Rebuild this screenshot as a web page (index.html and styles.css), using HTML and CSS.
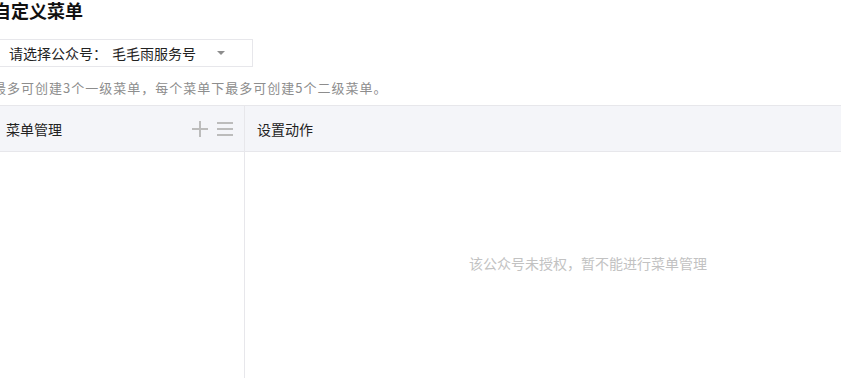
FILE: index.html
```html
<!DOCTYPE html>
<html lang="zh-CN">
<head>
  <meta charset="UTF-8">
  <title>自定义菜单</title>
  <link rel="stylesheet" href="styles.css">
</head>
<body>
  <div class="page">
    <h2 class="title">自定义菜单</h2>

    <div class="account-select">
      <span class="label">请选择公众号：</span>
      <span class="value">毛毛雨服务号</span>
      <span class="arrow"></span>
    </div>

    <p class="tips">最多可创建3个一级菜单，每个菜单下最多可创建5个二级菜单。</p>

    <div class="menu-box">
      <div class="menu-left">
        <div class="menu-hd">
          <span>菜单管理</span>
          <span class="tools">
            <svg width="16" height="16" viewBox="0 0 16 16"><path d="M8 0v16M0 8h16" stroke="#bcbcbc" stroke-width="2"/></svg>
            <svg width="16" height="16" viewBox="0 0 16 16"><path d="M0 2h16M0 8h16M0 14h16" stroke="#bcbcbc" stroke-width="2"/></svg>
          </span>
        </div>
      </div>
      <div class="menu-right">
        <div class="menu-hd">设置动作</div>
        <div class="empty">该公众号未授权，暂不能进行菜单管理</div>
      </div>
    </div>
  </div>
</body>
</html>
```

FILE: styles.css
```css
html, body {
  margin: 0;
  padding: 0;
  overflow: hidden;
  background: #fff;
}
body {
  font-family: "Noto Sans CJK SC", "Liberation Sans", sans-serif;
  color: #222;
  font-size: 14px;
}
.page {
  margin-left: -7px;
  width: 938px;
}
.title {
  margin: 0;
  font-size: 18px;
  line-height: 20px;
  font-weight: bold;
  color: #111;
}
.account-select {
  display: flex;
  align-items: center;
  box-sizing: border-box;
  width: 260px;
  height: 28px;
  margin-top: 19px;
  padding-left: 15px;
  border: 1px solid #e7e7eb;
  line-height: 26px;
}
.account-select .value {
  margin-left: 5px;
}
.account-select .arrow {
  margin-left: 21px;
  width: 0;
  height: 0;
  border-left: 4px solid transparent;
  border-right: 4px solid transparent;
  border-top: 4px solid #8d8d8d;
}
.tips {
  margin: 11px 0 7px;
  font-size: 13px;
  letter-spacing: 1px;
  line-height: 20px;
  color: #8d8d8d;
}
.menu-box {
  display: flex;
  min-height: 280px;
}
.menu-hd {
  display: flex;
  align-items: center;
  justify-content: space-between;
  height: 45px;
  background: #f4f5f9;
  border-top: 1px solid #e7e7eb;
  border-bottom: 1px solid #e7e7eb;
}
.menu-left {
  width: 251px;
  border-right: 1px solid #e7e7eb;
}
.menu-left .menu-hd {
  padding: 0 11px 0 13px;
}
.tools {
  display: flex;
  gap: 9px;
}
.tools svg {
  display: block;
}
.menu-right {
  flex: 1;
}
.menu-right .menu-hd {
  padding-left: 12px;
}
.empty {
  padding-top: 101px;
  text-align: center;
  line-height: 20px;
  color: #c2c2c2;
}
```
